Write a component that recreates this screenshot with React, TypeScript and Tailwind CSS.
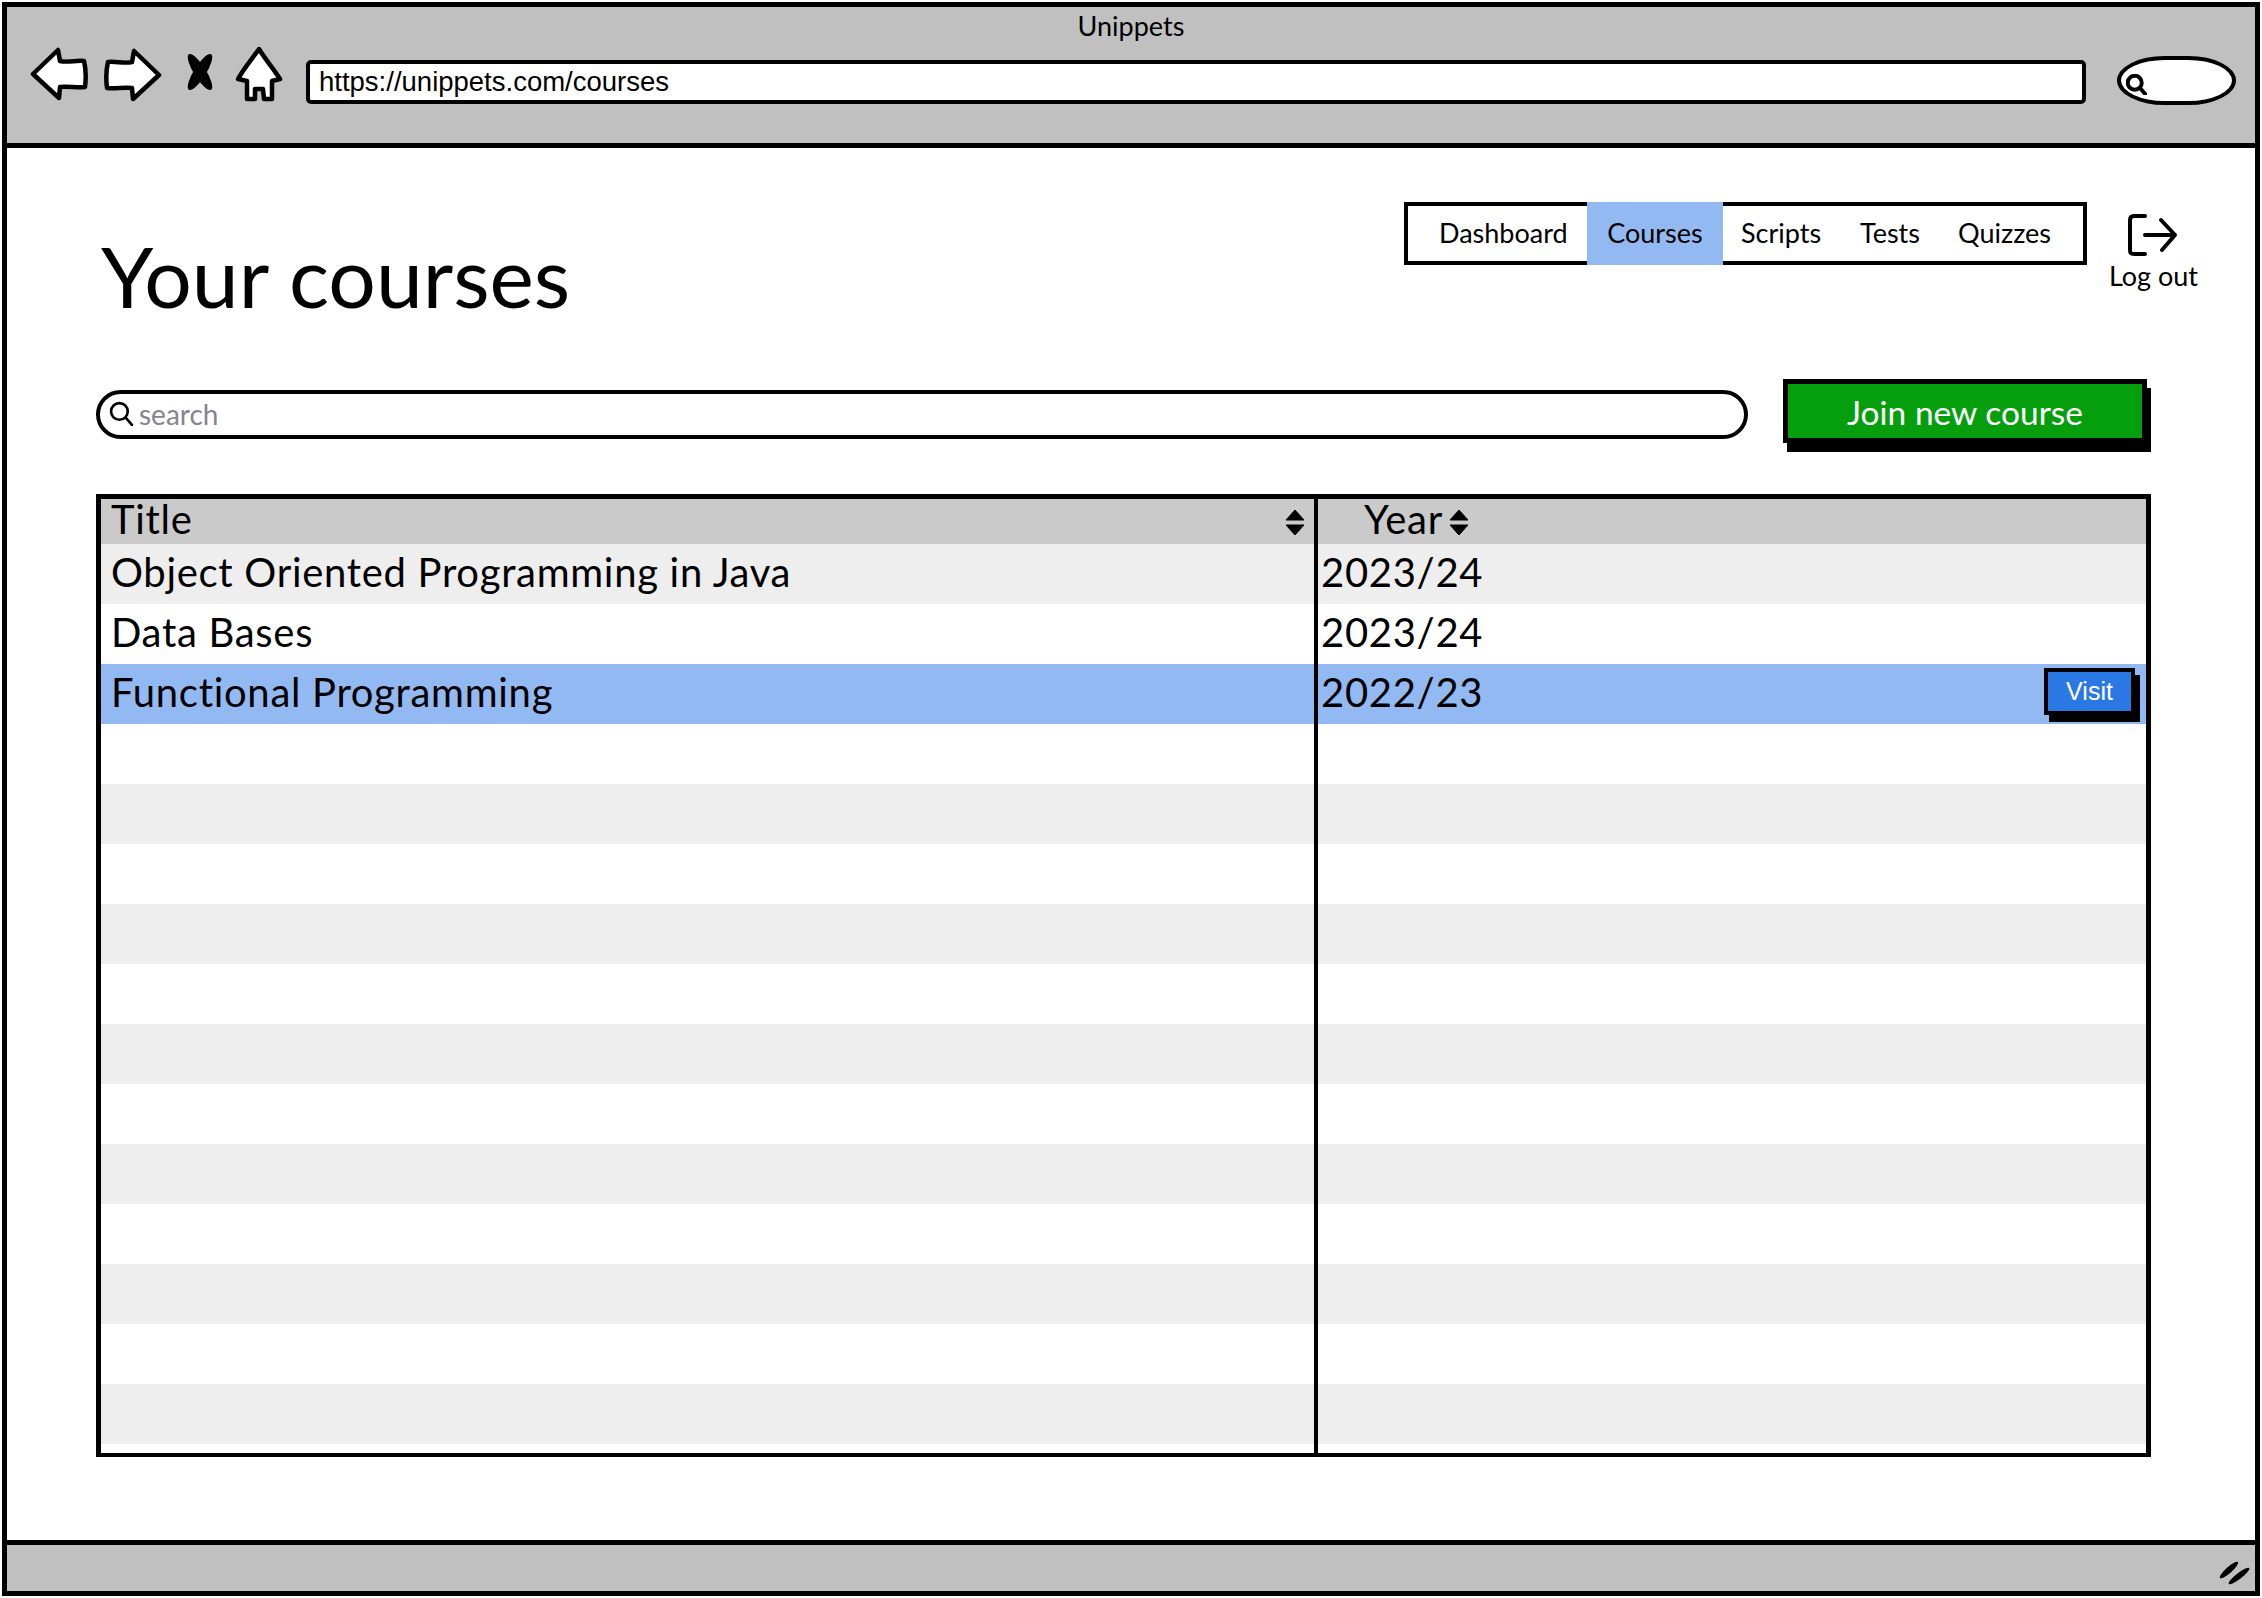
const rows = [
  { title: "Object Oriented Programming in Java", year: "2023/24" },
  { title: "Data Bases", year: "2023/24" },
  { title: "Functional Programming", year: "2022/23" },
  ...Array.from({ length: 12 }, () => ({ title: "", year: "" })),
];

const navItems = [
  { label: "Dashboard", className: "ml-[31px] w-[127px]" },
  { label: "Courses", className: "ml-[21px] w-[136px] -my-[4px] bg-[#93b9f2] justify-center" },
  { label: "Scripts", className: "ml-[18px] w-[81px]" },
  { label: "Tests", className: "ml-[38px] w-[62px]" },
  { label: "Quizzes", className: "ml-[36px] w-[92px]" },
];

function BackIcon({ flip }: { flip?: boolean }) {
  return (
    <svg width="59" height="54" viewBox="0 0 59 54" className={flip ? "-scale-x-100" : ""} aria-hidden>
      <path
        d="M3 27 L28 3 L30 14 C38 16 46 13 54 14 C56 22 56 32 55 40 C47 41 38 39 30 40 L29 51 Z"
        fill="#fff"
        stroke="#000"
        strokeWidth="4.5"
        strokeLinejoin="round"
      />
    </svg>
  );
}

function StopIcon() {
  return (
    <svg width="34" height="38" viewBox="0 0 34 38" aria-hidden>
      <ellipse cx="17" cy="19" rx="6" ry="21" transform="rotate(-32 17 19)" fill="#000" />
      <ellipse cx="17" cy="19" rx="6" ry="21" transform="rotate(32 17 19)" fill="#000" />
    </svg>
  );
}

function HomeIcon() {
  return (
    <svg width="48" height="56" viewBox="0 0 48 56" aria-hidden>
      <path
        d="M24 3 C30 13 38 22 45 33 L37 35 L37 53 L29 53 L28 43 L20 43 L20 53 L12 53 L12 35 L3 33 C9 22 17 13 24 3 Z"
        fill="#fff"
        stroke="#000"
        strokeWidth="4.5"
        strokeLinejoin="round"
      />
    </svg>
  );
}

function SearchGlyph({ size, stroke }: { size: number; stroke: number }) {
  return (
    <svg width={size} height={size} viewBox="0 0 24 24" aria-hidden>
      <circle cx="10" cy="10" r="8" fill="none" stroke="#000" strokeWidth={stroke} />
      <path d="M16 16 L22 23" stroke="#000" strokeWidth={stroke} strokeLinecap="round" />
    </svg>
  );
}

function SortIcon() {
  return (
    <svg width="20" height="27" viewBox="0 0 20 27" className="mt-[6px]" aria-hidden>
      <path d="M10 1 L19 11 L1 11 Z M10 26 L19 16 L1 16 Z" fill="#000" stroke="#000" strokeLinejoin="round" />
    </svg>
  );
}

function LogOutIcon() {
  return (
    <svg width="50" height="44" viewBox="0 0 50 44" fill="none" stroke="#000" strokeWidth="4" strokeLinecap="round" strokeLinejoin="round" aria-hidden>
      <path d="M17 3 L6 3 C3 3 2 5 2 7 L2 37 C2 40 3 41 6 41 L17 41" />
      <path d="M17 22 L47 22 M33 7 L47 22 L34 37" />
    </svg>
  );
}

function ResizeIcon() {
  return (
    <svg width="32" height="26" viewBox="0 0 32 26" aria-hidden>
      <ellipse cx="11" cy="10" rx="12" ry="3" transform="rotate(-42 11 10)" fill="#000" />
      <ellipse cx="21" cy="16" rx="13" ry="3" transform="rotate(-38 21 16)" fill="#000" />
    </svg>
  );
}

function BrowserHeader() {
  return (
    <header className="h-[141px] shrink-0 border-b-[5px] border-black bg-[#c0c0c0]">
      <div className="flex h-[38px] items-center justify-center pt-[1px] text-[27px]">Unippets</div>
      <div className="flex items-start">
        <div className="ml-[23px] mt-[2px]">
          <BackIcon />
        </div>
        <div className="ml-[14px] mt-[3px]">
          <BackIcon flip />
        </div>
        <div className="ml-[21px] mt-[8px]">
          <StopIcon />
        </div>
        <div className="ml-[18px] mt-[1px]">
          <HomeIcon />
        </div>
        <div className="ml-[23px] mt-[15px] flex h-[44px] w-[1780px] items-center rounded-[5px] border-[4px] border-black bg-white pl-[9px] text-[27.5px] [font-family:'Liberation_Sans',sans-serif]">
          https://unippets.com/courses
        </div>
        <div className="ml-[31px] mt-[11px] flex h-[49px] w-[119px] items-center rounded-[40%/50%] border-[4px] border-black bg-white pl-[5px] pt-[8px]">
          <SearchGlyph size={21} stroke={4.5} />
        </div>
      </div>
    </header>
  );
}

function CoursesTable() {
  return (
    <div className="ml-[89px] mr-[104px] mt-[51px] border-x-[5px] border-b-[4px] border-t-[5px] border-black text-[40px] leading-none tracking-[0.7px]">
      <div className="grid h-[45px] grid-cols-[1217px_1fr] bg-[#cacaca]">
        <div className="flex items-center justify-between border-r-[4px] border-black pb-[6px] pl-[10px] pr-[9px]">
          Title
          <SortIcon />
        </div>
        <div className="flex items-center gap-[6px] pb-[6px] pl-[46px]">
          Year
          <SortIcon />
        </div>
      </div>
      {rows.map((row, i) => (
        <div
          key={i}
          className={
            i === 2
              ? "grid h-[60px] grid-cols-[1217px_1fr] bg-[#93b9f2]"
              : i % 2 === 0
                ? "grid h-[60px] grid-cols-[1217px_1fr] bg-[#eeeeee]"
                : "grid h-[60px] grid-cols-[1217px_1fr] bg-white"
          }
        >
          <div className="flex items-center border-r-[4px] border-black pb-[5px] pl-[10px]">{row.title}</div>
          <div className="flex items-center justify-between pb-[5px] pl-[3px] pr-[11px]">
            {row.year}
            {i === 2 ? (
              <button
                type="button"
                className="flex h-[47px] w-[91px] items-center justify-center border-[4px] border-black bg-[#2a78e4] text-[25px] tracking-normal text-white shadow-[5px_7px_0_#000] [font-family:'Liberation_Sans',sans-serif]"
              >
                Visit
              </button>
            ) : null}
          </div>
        </div>
      ))}
      <div className="grid h-[9px] grid-cols-[1217px_1fr] bg-white">
        <div className="border-r-[4px] border-black" />
        <div />
      </div>
    </div>
  );
}

export default function App() {
  return (
    <div className="h-[1598px] w-[2262px] bg-white pl-[2px] pt-[2px] text-black [font-family:Lato,sans-serif]">
      <div className="flex h-[1594px] w-[2258px] flex-col border-[5px] border-black">
        <BrowserHeader />

        <main className="min-h-0 flex-1">
          <div className="flex h-[231px] items-start justify-between pl-[94px] pr-[58px] pt-[54px]">
            <h1 className="mt-[26px] text-[84px] leading-[96px] font-normal">Your courses</h1>
            <div className="flex items-start">
              <nav className="mr-[1px] flex h-[63px] w-[683px] border-[4px] border-black text-[27px]">
                {navItems.map((item) => (
                  <span key={item.label} className={`flex items-center whitespace-nowrap ${item.className}`}>
                    {item.label}
                  </span>
                ))}
              </nav>
              <div className="ml-[22px] flex w-[87px] flex-col items-center pt-[11px]">
                <div className="-ml-[1px]">
                  <LogOutIcon />
                </div>
                <span className="mt-[2px] text-[27px] leading-[34px] whitespace-nowrap">Log out</span>
              </div>
            </div>
          </div>

          <div className="ml-[89px] mr-[108px] flex items-start justify-between">
            <div className="mt-[11px] flex h-[49px] w-[1652px] items-center rounded-full border-[4px] border-black pb-[2px] pl-[9px] text-[28px] text-[#85858f]">
              <SearchGlyph size={25} stroke={2.5} />
              <span className="ml-[5px]">search</span>
            </div>
            <button
              type="button"
              className="flex h-[64px] w-[364px] items-center justify-center border-[5px] border-black bg-[#059f0d] pt-[2px] text-[33.5px] text-white shadow-[4px_9px_0_#000]"
            >
              Join new course
            </button>
          </div>

          <CoursesTable />
        </main>

        <footer className="flex h-[51px] shrink-0 items-end justify-end border-t-[5px] border-black bg-[#c0c0c0] pb-[5px] pr-[5px]">
          <ResizeIcon />
        </footer>
      </div>
    </div>
  );
}
